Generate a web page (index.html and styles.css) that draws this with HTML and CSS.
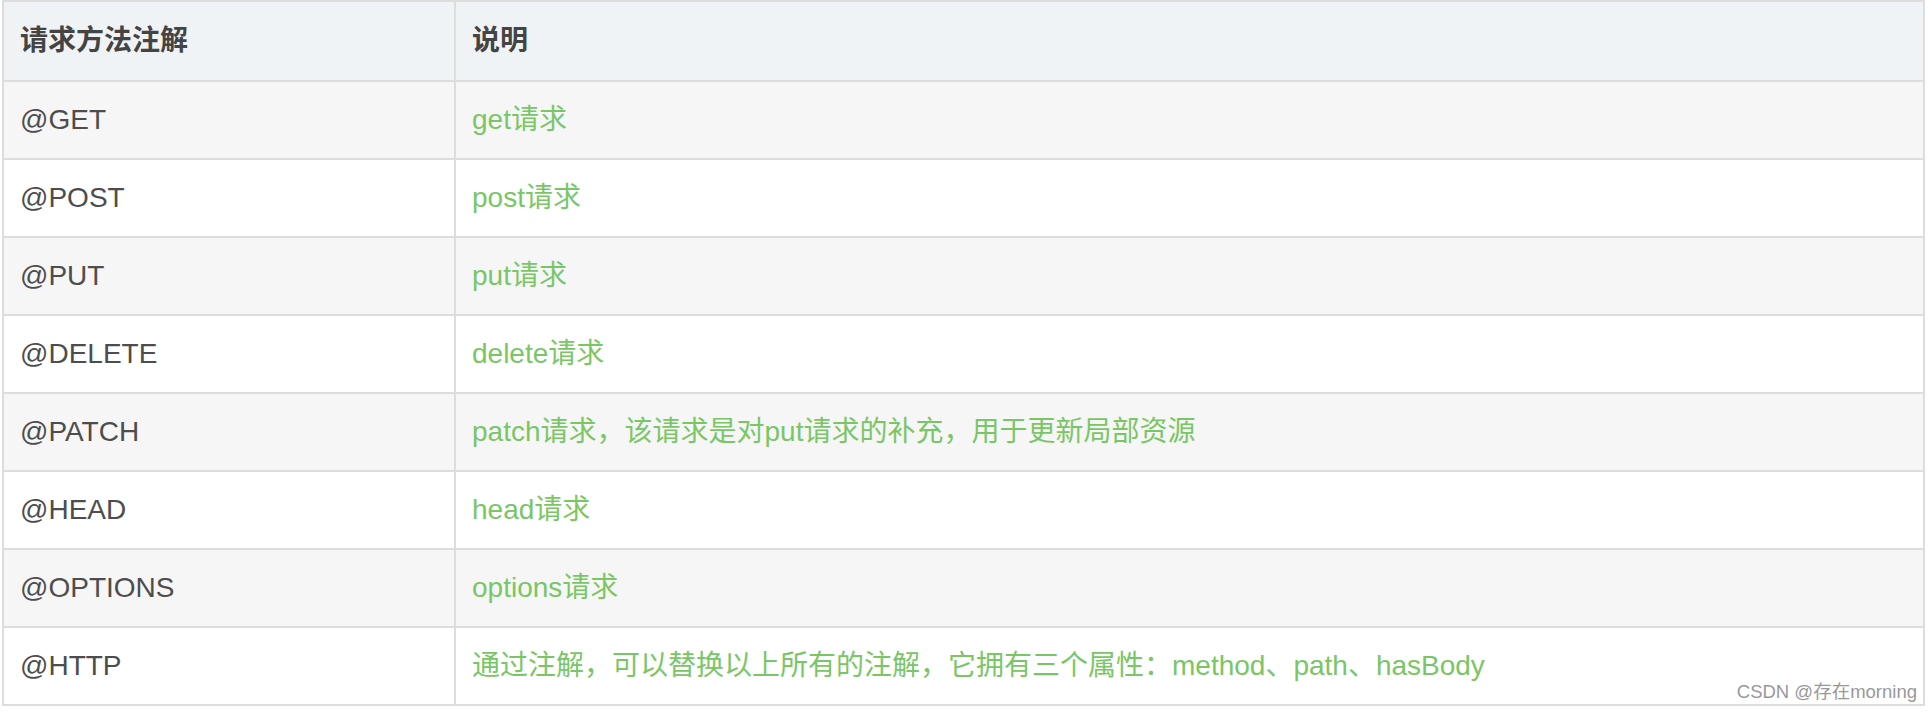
FILE: index.html
```html
<!DOCTYPE html>
<html lang="zh-CN">
<head>
<meta charset="utf-8">
<title>请求方法注解</title>
<link rel="stylesheet" href="styles.css">
</head>
<body>
<div class="page">
  <table class="api-table">
    <colgroup>
      <col class="col-name">
      <col class="col-desc">
    </colgroup>
    <thead>
      <tr><th>请求方法注解</th><th>说明</th></tr>
    </thead>
    <tbody>
      <tr><td>@GET</td><td class="desc">get请求</td></tr>
      <tr><td>@POST</td><td class="desc">post请求</td></tr>
      <tr><td>@PUT</td><td class="desc">put请求</td></tr>
      <tr><td>@DELETE</td><td class="desc">delete请求</td></tr>
      <tr><td>@PATCH</td><td class="desc">patch请求，该请求是对put请求的补充，用于更新局部资源</td></tr>
      <tr><td>@HEAD</td><td class="desc">head请求</td></tr>
      <tr><td>@OPTIONS</td><td class="desc">options请求</td></tr>
      <tr><td>@HTTP</td><td class="desc">通过注解，可以替换以上所有的注解，它拥有三个属性：method、path、hasBody</td></tr>
    </tbody>
  </table>
  <div class="watermark">CSDN @存在morning</div>
</div>
</body>
</html>
```
FILE: styles.css
```css
html, body {
  margin: 0;
  padding: 0;
  background: #ffffff;
}

.page {
  position: relative;
  width: 1932px;
  height: 712px;
  overflow: hidden;
  padding-left: 2px;
  box-sizing: border-box;
}

.api-table {
  border-collapse: separate;
  border-spacing: 0;
  width: 1923px;
  table-layout: fixed;
  border-left: 2px solid #dddddd;
  border-top: 2px solid #dddddd;
  font-family: "Liberation Sans", "Noto Sans CJK SC", sans-serif;
  font-size: 28px;
  color: #4d4d4d;
}

.col-name {
  width: 452px;
}

.api-table th,
.api-table td {
  border-right: 2px solid #dddddd;
  border-bottom: 2px solid #dddddd;
  padding: 20px 16px;
  line-height: 36px;
  text-align: left;
  white-space: nowrap;
}

.api-table th {
  background: #eff3f5;
  font-weight: bold;
  color: #444444;
  padding-top: 21px;
  padding-bottom: 21px;
}

.api-table tbody tr:nth-child(odd) td {
  background: #f6f6f6;
}

.api-table tbody tr:nth-child(even) td {
  background: #ffffff;
}

.api-table td.desc {
  color: #7ac666;
}

.watermark {
  position: absolute;
  right: 15px;
  bottom: 9px;
  font-family: "Liberation Sans", "Noto Sans CJK SC", sans-serif;
  font-size: 18.5px;
  color: #999999;
  text-shadow: 0 0 2px #ffffff;
}
```
